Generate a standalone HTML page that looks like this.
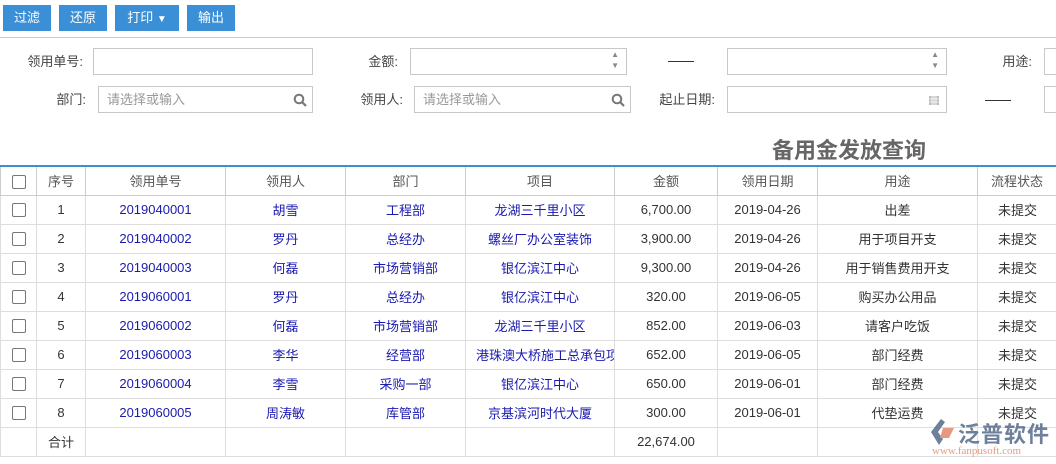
<!DOCTYPE html><html><head><meta charset="utf-8"><style>
*{box-sizing:border-box;margin:0;padding:0}
body{width:1056px;height:464px;overflow:hidden;background:#fff;font-family:"Liberation Sans","Noto Sans CJK SC",sans-serif;font-size:13px;color:#333;position:relative}
.btn{position:absolute;top:5px;height:26px;background:#3a8fd6;color:#fff;line-height:26px;text-align:center;font-size:13px}
.ab{position:absolute}
.lbl{position:absolute;text-align:right;font-size:13px;color:#444;line-height:27px}
.inp{position:absolute;height:27px;border:1px solid #c8c8c8;background:#fff;color:#999;line-height:25px;padding-left:8px;font-size:13px}
table{position:absolute;left:0;top:165px;border-collapse:collapse;table-layout:fixed;width:1070px;border-top:2px solid #3a8fd6}
td,th{border:1px solid #ddd;height:29px;text-align:center;font-weight:normal;white-space:nowrap;overflow:hidden;font-size:13px;color:#333}
th{color:#555;border-color:#ccc}
.b{color:#1a1ab0}
.cb{display:inline-block;width:14px;height:14px;border:1px solid #777;border-radius:2px;vertical-align:middle}
</style></head><body>
<div class="btn" style="left:3px;width:48px">过滤</div>
<div class="btn" style="left:59px;width:48px">还原</div>
<div class="btn" style="left:115px;width:64px">打印 <span style="font-size:10px">▼</span></div>
<div class="btn" style="left:187px;width:48px">输出</div>
<div class="ab" style="left:0;top:37px;width:1056px;height:1px;background:#ccc"></div>

<div class="lbl" style="left:0;top:48px;width:83px">领用单号:</div>
<div class="inp" style="left:93px;top:48px;width:220px"></div>
<div class="lbl" style="left:300px;top:48px;width:98px">金额:</div>
<div class="inp" style="left:410px;top:48px;width:217px"><span style="position:absolute;right:7px;top:0;font-size:8px;line-height:11px;color:#888">▲<br>▼</span></div>
<div class="ab" style="left:668px;top:61px;width:26px;height:1px;background:#333"></div>
<div class="inp" style="left:727px;top:48px;width:220px"><span style="position:absolute;right:7px;top:0;font-size:8px;line-height:11px;color:#888">▲<br>▼</span></div>
<div class="lbl" style="left:980px;top:48px;width:52px">用途:</div>
<div class="inp" style="left:1044px;top:48px;width:30px"></div>

<div class="lbl" style="left:0;top:86px;width:86px">部门:</div>
<div class="inp" style="left:98px;top:86px;width:215px">请选择或输入<svg style="position:absolute;right:5px;top:6px" width="14" height="14" viewBox="0 0 14 14"><circle cx="6" cy="6" r="4.3" fill="none" stroke="#777" stroke-width="2"/><path d="M9 9l4 4" stroke="#777" stroke-width="2.2"/></svg></div>
<div class="lbl" style="left:300px;top:86px;width:103px">领用人:</div>
<div class="inp" style="left:414px;top:86px;width:217px">请选择或输入<svg style="position:absolute;right:5px;top:6px" width="14" height="14" viewBox="0 0 14 14"><circle cx="6" cy="6" r="4.3" fill="none" stroke="#777" stroke-width="2"/><path d="M9 9l4 4" stroke="#777" stroke-width="2.2"/></svg></div>
<div class="lbl" style="left:620px;top:86px;width:95px">起止日期:</div>
<div class="inp" style="left:727px;top:86px;width:220px"><svg style="position:absolute;right:6px;top:7px" width="12" height="12" viewBox="0 0 12 12"><rect x="1" y="2" width="10" height="9" fill="#bbb"/><path d="M1 5h10M1 8h10M4 2v9M6 2v9M8 2v9" stroke="#fff" stroke-width=".8"/></svg></div>
<div class="ab" style="left:985px;top:100px;width:26px;height:1px;background:#333"></div>
<div class="inp" style="left:1044px;top:86px;width:30px"></div>

<div class="ab" style="left:696px;top:133px;width:306px;text-align:center;font-size:22px;font-weight:bold;color:#666">备用金发放查询</div>

<table>
<colgroup><col style="width:36px"><col style="width:49px"><col style="width:140px"><col style="width:120px"><col style="width:120px"><col style="width:149px"><col style="width:103px"><col style="width:100px"><col style="width:160px"><col style="width:93px"></colgroup>
<tr><th><span class="cb"></span></th><th>序号</th><th>领用单号</th><th>领用人</th><th>部门</th><th>项目</th><th>金额</th><th>领用日期</th><th>用途</th><th style="text-align:left;padding-left:13px">流程状态</th></tr>
<tr><td><span class="cb"></span></td><td>1</td><td class="b">2019040001</td><td class="b">胡雪</td><td class="b">工程部</td><td class="b">龙湖三千里小区</td><td>6,700.00</td><td>2019-04-26</td><td>出差</td><td style="text-align:left;padding-left:20px">未提交</td></tr>
<tr><td><span class="cb"></span></td><td>2</td><td class="b">2019040002</td><td class="b">罗丹</td><td class="b">总经办</td><td class="b">螺丝厂办公室装饰</td><td>3,900.00</td><td>2019-04-26</td><td>用于项目开支</td><td style="text-align:left;padding-left:20px">未提交</td></tr>
<tr><td><span class="cb"></span></td><td>3</td><td class="b">2019040003</td><td class="b">何磊</td><td class="b">市场营销部</td><td class="b">银亿滨江中心</td><td>9,300.00</td><td>2019-04-26</td><td>用于销售费用开支</td><td style="text-align:left;padding-left:20px">未提交</td></tr>
<tr><td><span class="cb"></span></td><td>4</td><td class="b">2019060001</td><td class="b">罗丹</td><td class="b">总经办</td><td class="b">银亿滨江中心</td><td>320.00</td><td>2019-06-05</td><td>购买办公用品</td><td style="text-align:left;padding-left:20px">未提交</td></tr>
<tr><td><span class="cb"></span></td><td>5</td><td class="b">2019060002</td><td class="b">何磊</td><td class="b">市场营销部</td><td class="b">龙湖三千里小区</td><td>852.00</td><td>2019-06-03</td><td>请客户吃饭</td><td style="text-align:left;padding-left:20px">未提交</td></tr>
<tr><td><span class="cb"></span></td><td>6</td><td class="b">2019060003</td><td class="b">李华</td><td class="b">经营部</td><td class="b" style="text-align:left;padding-left:10px">港珠澳大桥施工总承包项</td><td>652.00</td><td>2019-06-05</td><td>部门经费</td><td style="text-align:left;padding-left:20px">未提交</td></tr>
<tr><td><span class="cb"></span></td><td>7</td><td class="b">2019060004</td><td class="b">李雪</td><td class="b">采购一部</td><td class="b">银亿滨江中心</td><td>650.00</td><td>2019-06-01</td><td>部门经费</td><td style="text-align:left;padding-left:20px">未提交</td></tr>
<tr><td><span class="cb"></span></td><td>8</td><td class="b">2019060005</td><td class="b">周涛敏</td><td class="b">库管部</td><td class="b">京基滨河时代大厦</td><td>300.00</td><td>2019-06-01</td><td>代垫运费</td><td style="text-align:left;padding-left:20px">未提交</td></tr>
<tr><td></td><td>合计</td><td></td><td></td><td></td><td></td><td>22,674.00</td><td></td><td></td><td></td></tr>
</table>

<div class="ab" style="left:927px;top:417px;width:130px;height:44px;opacity:.85">
<svg class="ab" style="left:2px;top:1px" width="26" height="28" viewBox="0 0 26 28"><path d="M12 1L2 14l8 13 4-6-5-7 7-10z" fill="#556a8a"/><path d="M14 10h11l-5 10h-9z" fill="#e0896a"/></svg>
<div class="ab" style="left:31px;top:0px;font-size:22px;color:#556a8a;letter-spacing:1px;font-weight:bold">泛普软件</div>
<div class="ab" style="left:5px;top:28px;font-size:11px;color:#e0896a;font-family:'Liberation Serif',serif">www.fanpusoft.com</div>
</div>
</body></html>
